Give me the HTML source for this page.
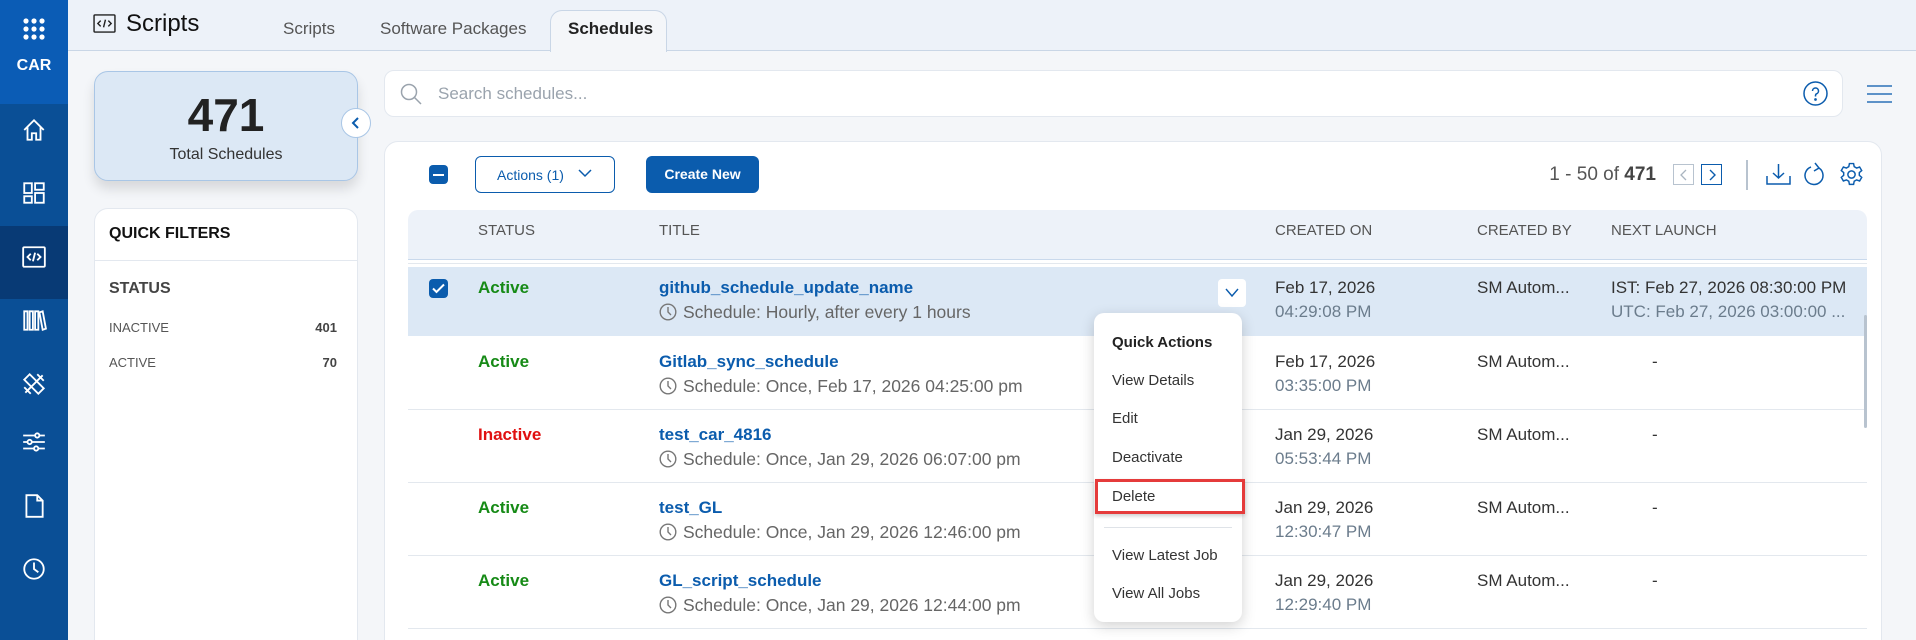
<!DOCTYPE html>
<html style="overflow:hidden;width:1916px;height:640px"><head><meta charset="utf-8"><style>
*{box-sizing:border-box;margin:0;padding:0}
body{width:1916px;height:640px;overflow:hidden;background:#f4f6f9;font-family:"Liberation Sans",sans-serif;position:relative;color:#222}
.a{position:absolute}
.side{left:0;top:0;width:68px;height:640px;background:#0a4f96}
.ico{position:absolute;left:21px;width:26px;height:26px}
.hdr{left:68px;top:0;width:1848px;height:51px;background:#edf2f9;border-bottom:1px solid #c9d6e6}
.tab{font-size:17px;color:#555;top:19px}
.card{background:#fff;border:1px solid #e3e8ef;border-radius:14px}
.th{top:222px;font-size:15px;color:#555}
.st{font-size:17px;font-weight:bold}
.tt{font-size:17px;font-weight:bold;color:#0b5cad}
.sub{font-size:17.5px;color:#666;padding-left:24px}
.sub svg{position:absolute;left:0;top:1px}
.d1{font-size:17px;color:#333}
.d2{font-size:17px;color:#6b7c8c}
.rowl{left:408px;width:1459px;height:1px;background:#e3e8ee}
.mi{left:1112px;font-size:15px;color:#333}
</style></head><body>
<div class="a side">
  <div class="a" style="left:0;top:0;width:68px;height:104px;background:#0b5cb5"></div>
  <div class="a" style="left:0;top:226px;width:68px;height:73px;background:#083a75"></div>
  <svg class="a" style="left:23px;top:18px" width="22" height="22" viewBox="0 0 22 22" fill="#fff"><circle cx="3" cy="3" r="2.6"/><circle cx="11" cy="3" r="2.6"/><circle cx="19" cy="3" r="2.6"/><circle cx="3" cy="11" r="2.6"/><circle cx="11" cy="11" r="2.6"/><circle cx="19" cy="11" r="2.6"/><circle cx="3" cy="19" r="2.6"/><circle cx="11" cy="19" r="2.6"/><circle cx="19" cy="19" r="2.6"/></svg>
  <div class="a" style="left:0;top:57px;width:68px;text-align:center;color:#fff;font-weight:bold;font-size:16px">CAR</div>
  <svg class="ico" style="top:117px" viewBox="0 0 24 24" fill="none" stroke="#fff" stroke-width="1.7"><path d="M3 12L12 3l9 9M6 9v12h4v-6h4v6h4V9"/></svg>
  <svg class="ico" style="top:180px" viewBox="0 0 24 24" fill="none" stroke="#fff" stroke-width="1.7"><rect x="3" y="3" width="7" height="9"/><rect x="3" y="15" width="7" height="6"/><rect x="13" y="3" width="8" height="6"/><rect x="13" y="12" width="8" height="9"/></svg>
  <svg class="ico" style="top:244px" viewBox="0 0 24 24" fill="none" stroke="#fff" stroke-width="1.7"><rect x="2" y="3" width="20" height="18" rx="1"/><path d="M9 9l-3 3 3 3M15 9l3 3-3 3M13 8l-2 8"/></svg>
  <svg class="ico" style="top:307px" viewBox="0 0 24 24" fill="none" stroke="#fff" stroke-width="1.7"><path d="M3 4h3v17H3zM8 4h3v17H8zM13 4h3v17h-3zM17 5l3-1 3 16-3 1z"/></svg>
  <svg class="ico" style="top:371px" viewBox="0 0 24 24" fill="none" stroke="#fff" stroke-width="1.7"><path d="M4 20L20 4M3 8l5-5 13 13-5 5zM15 3l6 6M3 15l6 6"/></svg>
  <svg class="ico" style="top:429px" viewBox="0 0 24 24" fill="none" stroke="#fff" stroke-width="1.7"><path d="M2 6h20M2 12h20M2 18h20"/><circle cx="15" cy="6" r="2" fill="#0a4f96"/><circle cx="8" cy="12" r="2" fill="#0a4f96"/><circle cx="14" cy="18" r="2" fill="#0a4f96"/></svg>
  <svg class="ico" style="top:493px" viewBox="0 0 24 24" fill="none" stroke="#fff" stroke-width="1.7"><path d="M5 2h10l5 5v15H5zM15 2v5h5"/></svg>
  <svg class="ico" style="top:556px" viewBox="0 0 24 24" fill="none" stroke="#fff" stroke-width="1.7"><circle cx="12" cy="12" r="9"/><path d="M12 6v6l4 3"/></svg>
</div>
<div class="a hdr"></div>
<svg class="a" style="left:93px;top:14px" width="23" height="19" viewBox="0 0 24 20" fill="none" stroke="#222" stroke-width="1.5"><rect x="1" y="1" width="22" height="18" rx="1"/><path d="M8 7l-3 3 3 3M16 7l3 3-3 3M13 6l-2 8"/></svg>
<div class="a" style="left:126px;top:10px;font-size:24px;color:#111">Scripts</div>
<div class="a tab" style="left:283px">Scripts</div>
<div class="a tab" style="left:380px">Software Packages</div>
<div class="a" style="left:550px;top:10px;width:117px;height:42px;background:#f4f6f9;border:1px solid #c9d6e6;border-bottom:none;border-radius:12px 12px 0 0"></div>
<div class="a tab" style="left:568px;font-weight:bold;color:#222">Schedules</div>

<div class="a" style="left:94px;top:71px;width:264px;height:110px;background:#dce8f5;border:1px solid #a9c6e6;border-radius:14px;box-shadow:0 8px 12px rgba(0,0,0,.12)"></div>
<div class="a" style="left:94px;top:88px;width:264px;text-align:center;font-size:46px;font-weight:bold;color:#222">471</div>
<div class="a" style="left:94px;top:146px;width:264px;text-align:center;font-size:16px;color:#333">Total Schedules</div>
<div class="a" style="left:341px;top:108px;width:30px;height:30px;border-radius:50%;background:#fff;border:1px solid #a9c6e6"></div>
<svg class="a" style="left:350px;top:116px" width="12" height="14" viewBox="0 0 12 14" fill="none" stroke="#0b5cad" stroke-width="2"><path d="M8 2L3 7l5 5"/></svg>

<div class="a card" style="left:94px;top:208px;width:264px;height:450px"></div>
<div class="a" style="left:109px;top:225px;font-size:16px;font-weight:bold;color:#111">QUICK FILTERS</div>
<div class="a" style="left:94px;top:260px;width:264px;height:1px;background:#e3e8ef"></div>
<div class="a" style="left:109px;top:280px;font-size:16px;font-weight:bold;color:#444">STATUS</div>
<div class="a" style="left:109px;top:320px;font-size:13px;color:#555">INACTIVE</div>
<div class="a" style="left:300px;top:320px;width:37px;text-align:right;font-size:13px;font-weight:bold;color:#444">401</div>
<div class="a" style="left:109px;top:355px;font-size:13px;color:#555">ACTIVE</div>
<div class="a" style="left:300px;top:355px;width:37px;text-align:right;font-size:13px;font-weight:bold;color:#444">70</div>

<div class="a card" style="left:384px;top:70px;width:1459px;height:47px;border-radius:10px"></div>
<svg class="a" style="left:399px;top:82px" width="24" height="24" viewBox="0 0 24 24" fill="none" stroke="#9aa3ad" stroke-width="1.5"><circle cx="10" cy="10" r="7.5"/><path d="M15.5 15.5L22 22"/></svg>
<div class="a" style="left:438px;top:84px;font-size:17px;color:#9aa3ad">Search schedules...</div>
<svg class="a" style="left:1803px;top:81px" width="25" height="25" viewBox="0 0 25 25" fill="none" stroke="#0b5cad" stroke-width="1.5"><circle cx="12.5" cy="12.5" r="11.5"/><path d="M9.5 10a3 3 0 1 1 4 2.8c-.8.4-1 1-1 2v.7"/><circle cx="12.5" cy="18.5" r=".6" fill="#0b5cad"/></svg>
<svg class="a" style="left:1867px;top:85px" width="25" height="18" viewBox="0 0 25 18" stroke="#2b70b8" stroke-width="1.6"><path d="M0 1h25M0 9h25M0 17h25"/></svg>

<div class="a card" style="left:384px;top:141px;width:1498px;height:520px"></div>
<div class="a" style="left:429px;top:165px;width:19px;height:19px;border-radius:4px;background:#0b5cad"></div>
<div class="a" style="left:433px;top:174px;width:11px;height:2px;background:#fff"></div>
<div class="a" style="left:475px;top:156px;width:140px;height:37px;border:1px solid #0b5cad;border-radius:6px"></div>
<div class="a" style="left:497px;top:167px;font-size:14px;color:#0b5cad">Actions (1)</div>
<svg class="a" style="left:578px;top:169px" width="14" height="9" viewBox="0 0 14 9" fill="none" stroke="#0b5cad" stroke-width="1.5"><path d="M1 1l6 6 6-6"/></svg>
<div class="a" style="left:646px;top:156px;width:113px;height:37px;border-radius:6px;background:#0b5cad;color:#fff;font-size:14px;font-weight:bold;text-align:center;line-height:37px">Create New</div>
<div class="a" style="left:1500px;top:164px;width:156px;text-align:right;font-size:19px;color:#555">1 - 50 of <b style="color:#444">471</b></div>
<div class="a" style="left:1673px;top:164px;width:21px;height:21px;border:1px solid #b8c3cf"></div>
<svg class="a" style="left:1679px;top:169px" width="9" height="12" viewBox="0 0 9 12" fill="none" stroke="#aab5c0" stroke-width="1.3"><path d="M7 1L2 6l5 5"/></svg>
<div class="a" style="left:1701px;top:164px;width:21px;height:21px;border:1.5px solid #0b5cad"></div>
<svg class="a" style="left:1708px;top:169px" width="9" height="12" viewBox="0 0 9 12" fill="none" stroke="#0b5cad" stroke-width="1.4"><path d="M2 1l5 5-5 5"/></svg>
<div class="a" style="left:1746px;top:160px;width:2px;height:30px;background:#b8c3cf"></div>
<svg class="a" style="left:1766px;top:163px" width="25" height="22" viewBox="0 0 25 22" fill="none" stroke="#0b5cad" stroke-width="1.5"><path d="M1 13v8h23v-8M12.5 1v14M7 10l5.5 5 5.5-5"/></svg>
<svg class="a" style="left:1804px;top:162px" width="22" height="25" viewBox="0 0 22 25" fill="none" stroke="#0b5cad" stroke-width="1.5"><path d="M15 6a9 9 0 1 1-8-1"/><path d="M11 1l4 5-5 3"/></svg>
<svg class="a" style="left:1839px;top:162px" width="25" height="25" viewBox="0 0 24 24" fill="none" stroke="#0b5cad" stroke-width="1.4"><circle cx="12" cy="12" r="3.5"/><path d="M10 1.5h4l.6 3 2.3 1.3 2.9-1 2 3.4-2.3 2v2.6l2.3 2-2 3.4-2.9-1-2.3 1.3-.6 3h-4l-.6-3-2.3-1.3-2.9 1-2-3.4 2.3-2v-2.6l-2.3-2 2-3.4 2.9 1 2.3-1.3z"/></svg>

<div class="a" style="left:408px;top:210px;width:1459px;height:50px;background:#edf2f9;border-radius:10px 10px 0 0;border-bottom:1px solid #c9d9ec"></div>
<div class="a th" style="left:478px">STATUS</div>
<div class="a th" style="left:659px">TITLE</div>
<div class="a th" style="left:1275px">CREATED ON</div>
<div class="a th" style="left:1477px">CREATED BY</div>
<div class="a th" style="left:1611px">NEXT LAUNCH</div>
<div class="a rowl" style="top:263px"></div>

<div class="a" style="left:408px;top:267px;width:1459px;height:69px;background:#dce8f5"></div>
<div class="a" style="left:429px;top:279px;width:19px;height:19px;border-radius:4px;background:#0b5cad"></div>
<svg class="a" style="left:432px;top:283px" width="13" height="11" viewBox="0 0 13 11" fill="none" stroke="#fff" stroke-width="2"><path d="M1 5.5l3.5 3.5L12 1.5"/></svg>
<div class="a" style="left:1218px;top:279px;width:28px;height:28px;background:#fff;border-radius:4px"></div>
<svg class="a" style="left:1225px;top:288px" width="14" height="10" viewBox="0 0 14 10" fill="none" stroke="#0b5cad" stroke-width="1.4"><path d="M1 1l6 7 6-7"/></svg>

<svg width="0" height="0" style="position:absolute"><defs><symbol id="clk" viewBox="0 0 18 18"><circle cx="9" cy="9" r="7.8" fill="none" stroke="#777" stroke-width="1.4"/><path d="M9 4v5l3 3" fill="none" stroke="#777" stroke-width="1.4"/></symbol></defs></svg>

<div class="a st" style="left:478px;top:278px;color:#168a16">Active</div>
<div class="a tt" style="left:659px;top:278px">github_schedule_update_name</div>
<div class="a sub" style="left:659px;top:302px"><svg width="18" height="18"><use href="#clk"/></svg>Schedule: Hourly, after every 1 hours</div>
<div class="a d1" style="left:1275px;top:278px">Feb 17, 2026</div>
<div class="a d2" style="left:1275px;top:302px">04:29:08 PM</div>
<div class="a d1" style="left:1477px;top:278px">SM Autom...</div>
<div class="a d1" style="left:1611px;top:278px">IST: Feb 27, 2026 08:30:00 PM</div>
<div class="a d2" style="left:1611px;top:302px">UTC: Feb 27, 2026 03:00:00 ...</div>

<div class="a st" style="left:478px;top:352px;color:#168a16">Active</div>
<div class="a tt" style="left:659px;top:352px">Gitlab_sync_schedule</div>
<div class="a sub" style="left:659px;top:376px"><svg width="18" height="18"><use href="#clk"/></svg>Schedule: Once, Feb 17, 2026 04:25:00 pm</div>
<div class="a d1" style="left:1275px;top:352px">Feb 17, 2026</div>
<div class="a d2" style="left:1275px;top:376px">03:35:00 PM</div>
<div class="a d1" style="left:1477px;top:352px">SM Autom...</div>
<div class="a d1" style="left:1652px;top:352px">-</div>
<div class="a rowl" style="top:409px"></div>

<div class="a st" style="left:478px;top:425px;color:#e01010">Inactive</div>
<div class="a tt" style="left:659px;top:425px">test_car_4816</div>
<div class="a sub" style="left:659px;top:449px"><svg width="18" height="18"><use href="#clk"/></svg>Schedule: Once, Jan 29, 2026 06:07:00 pm</div>
<div class="a d1" style="left:1275px;top:425px">Jan 29, 2026</div>
<div class="a d2" style="left:1275px;top:449px">05:53:44 PM</div>
<div class="a d1" style="left:1477px;top:425px">SM Autom...</div>
<div class="a d1" style="left:1652px;top:425px">-</div>
<div class="a rowl" style="top:482px"></div>

<div class="a st" style="left:478px;top:498px;color:#168a16">Active</div>
<div class="a tt" style="left:659px;top:498px">test_GL</div>
<div class="a sub" style="left:659px;top:522px"><svg width="18" height="18"><use href="#clk"/></svg>Schedule: Once, Jan 29, 2026 12:46:00 pm</div>
<div class="a d1" style="left:1275px;top:498px">Jan 29, 2026</div>
<div class="a d2" style="left:1275px;top:522px">12:30:47 PM</div>
<div class="a d1" style="left:1477px;top:498px">SM Autom...</div>
<div class="a d1" style="left:1652px;top:498px">-</div>
<div class="a rowl" style="top:555px"></div>

<div class="a st" style="left:478px;top:571px;color:#168a16">Active</div>
<div class="a tt" style="left:659px;top:571px">GL_script_schedule</div>
<div class="a sub" style="left:659px;top:595px"><svg width="18" height="18"><use href="#clk"/></svg>Schedule: Once, Jan 29, 2026 12:44:00 pm</div>
<div class="a d1" style="left:1275px;top:571px">Jan 29, 2026</div>
<div class="a d2" style="left:1275px;top:595px">12:29:40 PM</div>
<div class="a d1" style="left:1477px;top:571px">SM Autom...</div>
<div class="a d1" style="left:1652px;top:571px">-</div>
<div class="a rowl" style="top:628px"></div>

<div class="a" style="left:1864px;top:315px;width:3px;height:113px;background:#b8c3cf;border-radius:2px"></div>

<div class="a" style="left:1094px;top:313px;width:148px;height:309px;background:#fff;border-radius:10px;box-shadow:0 4px 14px rgba(0,0,0,.18)"></div>
<div class="a mi" style="top:334px;font-weight:bold;color:#222">Quick Actions</div>
<div class="a mi" style="top:372px">View Details</div>
<div class="a mi" style="top:410px">Edit</div>
<div class="a mi" style="top:449px">Deactivate</div>
<div class="a" style="left:1095px;top:479px;width:150px;height:35px;border:3px solid #e53b3b;box-shadow:0 2px 4px rgba(0,0,0,.2)"></div>
<div class="a mi" style="top:488px">Delete</div>
<div class="a" style="left:1104px;top:527px;width:128px;height:1px;background:#dfe3e8"></div>
<div class="a mi" style="top:547px">View Latest Job</div>
<div class="a mi" style="top:585px">View All Jobs</div>
</body></html>
